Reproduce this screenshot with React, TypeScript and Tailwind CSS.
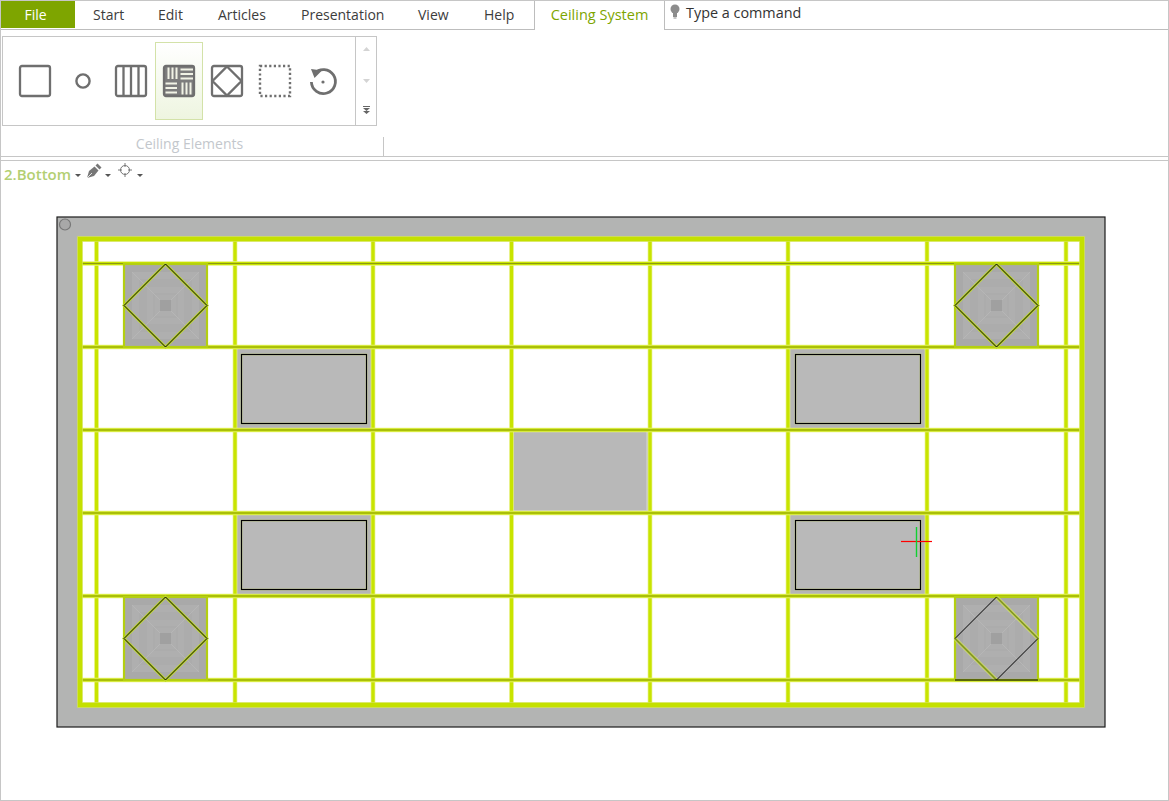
import React from "react";

const FONT = { fontFamily: '"Open Sans", "Noto Sans", sans-serif' };
const VX = [96.5, 235, 373, 511.5, 650, 788, 927, 1066];
const HY = [263.5, 347, 430, 513, 596, 680];

function IconFrame({ children }: { children: React.ReactNode }) {
  return (
    <svg width="36" height="36" viewBox="0 0 36 36" fill="none" stroke="#6f6f6f" strokeWidth="2.3">
      {children}
    </svg>
  );
}

const Rect = () => <rect x="3" y="3" width="30" height="30" rx="2" />;

const tools: React.ReactNode[] = [
  <IconFrame key="a"><Rect /></IconFrame>,
  <IconFrame key="b"><circle cx="18" cy="18" r="6.6" strokeWidth="2.4" /></IconFrame>,
  <IconFrame key="c">
    <Rect />
    <path d="M10.5 3v30M18 3v30M25.5 3v30" />
  </IconFrame>,
  <IconFrame key="d">
    <rect x="3" y="3" width="30" height="30" rx="2" fill="#7d7d7d" />
    <path d="M7.500 4.500V16M11.500 4.500V16M15.500 4.500V16M19.500 6.500H32M19.500 11H32M19.500 15.500H32M4.500 20.500H16M4.500 25H16M4.500 29.500H16M21.500 19.500V31.500M25.500 19.500V31.500M29.500 19.500V31.500" stroke="#f1f3e6" strokeWidth="2" />
  </IconFrame>,
  <IconFrame key="e">
    <Rect />
    <path d="M18 3.500 32.500 18 18 32.500 3.500 18Z" />
  </IconFrame>,
  <IconFrame key="f"><rect x="3" y="3" width="30" height="30" strokeWidth="2.4" strokeDasharray="2.2 2.4" /></IconFrame>,
  <IconFrame key="g">
    <path d="M9.500 10.500A12 12 0 1 1 6.400 19" strokeWidth="2.8" />
    <path d="M6 6 17 7.500 9.500 15Z" fill="#6f6f6f" stroke="none" />
    <circle cx="18" cy="19" r="1.6" fill="#6f6f6f" stroke="none" />
  </IconFrame>,
];

const Caret = () => (
  <svg width="6" height="4" viewBox="0 0 6 4" className="mt-[10px]">
    <path d="M0 0h6L3 3Z" fill="#555" />
  </svg>
);

function Tile({ x, y, odd }: { x: number; y: number; odd?: boolean }) {
  const s = 83;
  const rings = [
    { i: 0, f: "#a9a9a9" },
    { i: 8, f: "#afafaf" },
    { i: 15, f: "#acacac" },
    { i: 23, f: "#afafaf" },
    { i: 29, f: "#acacac" },
    { i: 31, f: "#aeaeae" },
    { i: 36, f: "#a0a0a0" },
  ];
  const cx = x + s / 2;
  const cy = y + s / 2;
  const diamond = `M${cx} ${y}L${x + s} ${cy}L${cx} ${y + s}L${x} ${cy}Z`;
  return (
    <g>
      {rings.map((r) => (
        <rect key={r.i} x={x + r.i} y={y + r.i} width={s - 2 * r.i} height={s - 2 * r.i} fill={r.f} />
      ))}
      <path d={`M${x + 8} ${y + 8}L${x + 36} ${y + 36}M${x + s - 8} ${y + 8}L${x + s - 36} ${y + 36}M${x + 8} ${y + s - 8}L${x + 36} ${y + s - 36}M${x + s - 8} ${y + s - 8}L${x + s - 36} ${y + s - 36}`} stroke="#b6b6b6" strokeWidth="1" />
      <rect x={x} y={y} width={s} height={s} fill="none" stroke="#b4cf10" strokeWidth="2.2" />
      {odd ? (
        <>
          <path d={`M${cx} ${y}L${x + s} ${cy}M${x} ${cy}L${cx} ${y + s}`} stroke="#d5e36a" strokeWidth="3.4" />
          <path d={`M${cx} ${y}L${x + s} ${cy}M${x} ${cy}L${cx} ${y + s}`} stroke="#86982a" strokeWidth="1.8" />
          <path d={`M${x} ${cy}L${cx} ${y}M${cx} ${y + s}L${x + s} ${cy}M${x} ${y + s}H${x + s}`} stroke="#000" strokeWidth="1" fill="none" />
        </>
      ) : (
        <>
          <path d={diamond} fill="none" stroke="#bcd62a" strokeWidth="2.8" />
          <path d={diamond} fill="none" stroke="#000" strokeWidth="1" />
        </>
      )}
    </g>
  );
}

function Panel({ x, y, inset }: { x: number; y: number; inset: number }) {
  return (
    <g>
      <rect x={x} y={y} width="139" height="83" fill="#b5b5b5" />
      <rect x={x + inset} y={y + 7.5} width="125" height="69" fill="#b9b9b9" stroke="#c9d39a" strokeWidth="2" />
      <rect x={x + inset} y={y + 7.5} width="125" height="69" fill="none" stroke="#000" strokeWidth="1.2" />
    </g>
  );
}

function Drawing() {
  return (
    <svg width="1052" height="514" viewBox="55 215 1052 514" className="block ml-[54px] mt-[25px]">
      <rect x="57" y="217" width="1048" height="510" fill="#b3b4b3" stroke="#1c1c1c" strokeWidth="1.2" />
      <circle cx="65" cy="224.500" r="5.500" fill="#a8a8a8" stroke="#777" strokeWidth="1.2" />
      <rect x="80" y="239" width="1002" height="466" fill="#ffffff" />

      <rect x="511" y="430" width="139" height="83" fill="#c8c8c8" />
      <rect x="513" y="432" width="133" height="78" fill="#b8b8b8" />
      <Panel x={235} y={347} inset={6.5} />
      <Panel x={788} y={347} inset={7.5} />
      <Panel x={235} y={513} inset={6.5} />
      <Panel x={788} y={513} inset={7.5} />

      {VX.map((x) => (
        <g key={x}>
          <path d={`M${x} 239V705`} stroke="#e6f080" strokeWidth="4.6" />
          <path d={`M${x} 239V705`} stroke="#c8e400" strokeWidth="3.2" />
        </g>
      ))}
      {HY.map((y) => (
        <g key={y}>
          <path d={`M80 ${y}H1082`} stroke="#e6f080" strokeWidth="4.6" />
          <path d={`M80 ${y}H1082`} stroke="#c8e400" strokeWidth="3" />
          <path d={`M80 ${y}H1082`} stroke="#8c9a10" strokeWidth="1" />
        </g>
      ))}
      <rect x="80" y="239" width="1002" height="466" fill="none" stroke="#d3e44a" strokeWidth="5.6" />
      <rect x="80" y="239" width="1002" height="466" fill="none" stroke="#c4e000" strokeWidth="4" />

      <Tile x={124} y={264} />
      <Tile x={955} y={264} />
      <Tile x={124} y={597} />
      <Tile x={955} y={597} odd />

      <path d="M901 541.500H932" stroke="#ff0000" strokeWidth="1.2" />
      <path d="M916.500 527V557" stroke="#10d030" strokeWidth="1.4" />
    </svg>
  );
}

export default function App() {
  return (
    <div className="relative w-[1169px] h-[801px] bg-white border border-[#c6c6c6] overflow-hidden" style={FONT}>
      <div className="flex h-[28px] border-b border-[#bdbdbd] text-[14px] leading-[27px] text-[#3c3c3c] box-content">
        <div className="w-[74px] h-[27px] bg-[#7ea500] text-white text-center pr-[5px]">File</div>
        <div className="w-[67px] pl-[18px]">Start</div>
        <div className="w-[60px] pl-[16px]">Edit</div>
        <div className="w-[83px] pl-[16px]">Articles</div>
        <div className="w-[116px] pl-[16px]">Presentation</div>
        <div className="w-[66px] pl-[17px]">View</div>
        <div className="w-[67px] pl-[17px]">Help</div>
        <div className="w-[131px] h-[29px] bg-white border-x border-[#bdbdbd] text-center text-[14.500px] text-[#7ea500]">Ceiling System</div>
        <div className="flex items-start pl-[5px] pt-[2px] text-[14.400px] leading-[20px] text-[#333]">
          <svg width="10" height="16" viewBox="0 0 10 16" className="mr-[6px] mt-[1px]">
            <circle cx="5" cy="5" r="4.500" fill="#8c8c8c" />
            <rect x="3" y="9" width="4" height="4" fill="#8c8c8c" />
            <rect x="3.500" y="13.500" width="3" height="1" fill="#8c8c8c" />
          </svg>
          Type a command
        </div>
      </div>

      <div className="h-[120px] pt-[6px] border-b border-[#c6c6c6] box-content">
        <div className="flex ml-[1px] w-[375px] h-[90px] border border-[#c6c6c6]">
          <div className="flex flex-1 items-center pl-[8px]">
            {tools.map((t, i) => (
              <div
                key={i}
                className={
                  i === 3
                    ? "flex items-center justify-center w-[48px] h-[78px] border border-[#d3e2a8] bg-gradient-to-b from-white to-[#eef5e0]"
                    : "flex items-center justify-center w-[48px] h-[78px]"
                }
              >
                {t}
              </div>
            ))}
          </div>
          <div className="flex flex-col items-center w-[21px] border-l border-[#c6c6c6] pt-[10px]">
            <svg width="7" height="5" viewBox="0 0 7 5"><path d="M3.500 0 7 4H0Z" fill="#d4d4d4" /></svg>
            <svg width="7" height="5" viewBox="0 0 7 5" className="mt-[27px]"><path d="M0 0h7L3.500 4Z" fill="#d4d4d4" /></svg>
            <svg width="7" height="8" viewBox="0 0 7 8" className="mt-[22px]"><path d="M0 0h7v1H0ZM0 2h7L3.500 5ZM0 5h7L3.500 8Z" fill="#666" /></svg>
          </div>
        </div>
        <div className="flex h-[30px] mt-[1px]">
          <div className="w-[377px] pt-[7px] text-center text-[14px] leading-[20px] text-[#c3c7cc]">Ceiling Elements</div>
          <div className="ml-[5px] mt-[10px] w-px h-[20px] bg-[#c6c6c6]" />
        </div>
      </div>

      <div className="flex items-start h-[26px] mt-[3px] border-t border-[#c6c6c6] pl-[3px] pt-[3px] box-content">
        <span className="text-[15px] leading-[20px] font-semibold text-[#b3cf72]">2.Bottom</span>
        <span className="ml-[4px]"><Caret /></span>
        <svg width="16" height="16" viewBox="0 0 16 16" className="ml-[5px] -mt-[1px]">
          <path d="M1 15 3 8 8.500 3.500 12.500 7.500 8 13Z" fill="#777" />
          <path d="M9.500 2.500 11.500 0.500 15.500 4.500 13.500 6.500Z" fill="#777" />
          <path d="M1 15 6 10" stroke="#fff" strokeWidth="0.8" />
        </svg>
        <span className="ml-[3px]"><Caret /></span>
        <svg width="14" height="14" viewBox="0 0 14 14" fill="none" stroke="#777" strokeWidth="1" className="ml-[7px] -mt-[1px]">
          <circle cx="7" cy="7" r="4.500" />
          <path d="M7 0v4M7 10v4M0 7h4M10 7h4" />
        </svg>
        <span className="ml-[5px]"><Caret /></span>
      </div>

      <Drawing />
    </div>
  );
}
